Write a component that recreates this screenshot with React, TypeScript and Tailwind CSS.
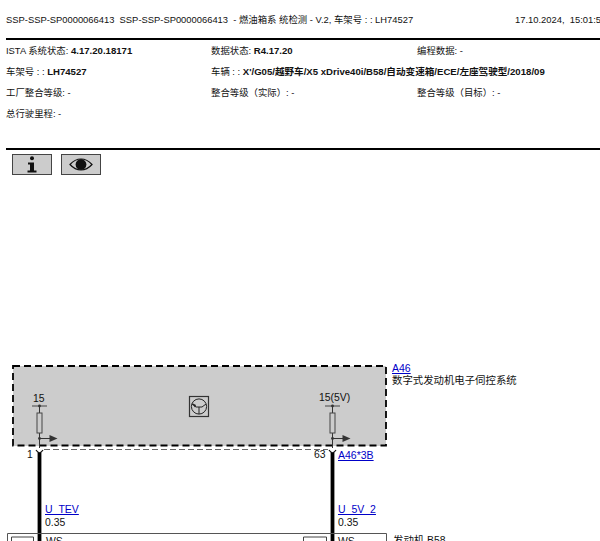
const fontStack = 'font-["Liberation_Sans","Noto_Sans_CJK_SC",sans-serif]'

type InfoRow = { label: string; value?: string }

const infoRows: InfoRow[] = [
  { label: 'ISTA 系统状态: ', value: '4.17.20.18171' },
  { label: '数据状态: ', value: 'R4.17.20' },
  { label: '编程数据: -' },
  { label: '车架号 : : ', value: 'LH74527' },
  { label: '车辆 : : ', value: "X'/G05/越野车/X5 xDrive40i/B58/自动变速箱/ECE/左座驾驶型/2018/09" },
  { label: '' },
  { label: '工厂整合等级: -' },
  { label: '整合等级（实际）: -' },
  { label: '整合等级（目标）: -' },
  { label: '总行驶里程: -' },
]

function InfoIcon() {
  return (
    <svg width="14" height="17" viewBox="0 0 14 17">
      <circle cx="7" cy="2.3" r="2" fill="#111" />
      <path d="M3 6.5h6v8h2.5v2h-9v-2H5v-6H3z" fill="#111" />
    </svg>
  )
}

function EyeIcon() {
  return (
    <svg width="24" height="13" viewBox="0 0 24 13">
      <path d="M1 6.5C5 2 8.5 1 12 1s7 1 11 5.5C19 11 15.5 12 12 12S5 11 1 6.5z" fill="none" stroke="#111" strokeWidth="1.2" />
      <circle cx="12" cy="6.5" r="5.4" fill="#111" />
    </svg>
  )
}

function Pin({ x }: { x: number }) {
  return (
    <g>
      <path d={`M${x - 7.5} 406h15`} stroke="#444" strokeWidth="1" />
      <circle cx={x} cy="406" r="1.4" fill="#333" />
      <path d={`M${x} 406v7M${x} 433v15`} stroke="#333" strokeWidth="1" />
      <rect x={x - 2.5} y="413" width="5" height="20" fill="#ccc" stroke="#444" strokeWidth="1" />
      <circle cx={x} cy="438.5" r="1.4" fill="#333" />
      <path d={`M${x} 438.5h11`} stroke="#333" strokeWidth="1" />
      <path d={`M${x + 10} 435v7l8-3.5z`} fill="#333" />
      <path d={`M${x - 3.5} 450q3.5 5.5 7 0`} fill="none" stroke="#111" strokeWidth="1.2" />
      <path d={`M${x} 453V541`} stroke="#000" strokeWidth="3.8" />
    </g>
  )
}

function Wiring() {
  return (
    <svg className="absolute left-0 top-0" width="600" height="176" viewBox="0 365 600 176">
      <rect x="13" y="366" width="373" height="80" fill="#ccc" />
      <path d="M13 366H386V445.5H13Z" fill="none" stroke="#000" strokeWidth="1.8" strokeDasharray="7 4" />
      <path d="M44 449.5H328" stroke="#666" strokeWidth="1.1" strokeDasharray="6 3" />
      <Pin x={39.5} />
      <Pin x={332.5} />
      <rect x="189.5" y="396.5" width="19" height="20" fill="#ccc" stroke="#333" strokeWidth="1.2" />
      <circle cx="199" cy="406.5" r="7.6" fill="none" stroke="#222" strokeWidth="1" />
      <path d="M192 404l4 3h6l4-3M199 407v7" fill="none" stroke="#222" strokeWidth="1" />
      <path d="M192 403l4 2-1 2.5z" fill="#222" />
      <path d="M7.5 541V533.5H386.5V541" fill="none" stroke="#555" strokeWidth="1" />
      <path d="M11.5 541V537H33.5V541M303.5 541V537H326.5V541" fill="none" stroke="#444" strokeWidth="1" />
    </svg>
  )
}

function Label({ className, children }: { className: string; children: React.ReactNode }) {
  return <span className={`absolute text-[10.4px] leading-3 whitespace-nowrap text-[#111] ${className}`}>{children}</span>
}

function WireLink({ className, children }: { className: string; children: React.ReactNode }) {
  return <span className={`absolute text-[10.5px] leading-3 whitespace-nowrap text-[#0000c8] underline ${className}`}>{children}</span>
}

export default function App() {
  return (
    <div className={`w-[600px] h-[541px] overflow-hidden bg-white text-[9.4px] text-[#111] ${fontStack}`}>
      {/* Title bar */}
      <div className="flex whitespace-nowrap pl-[6px] pt-[13px] h-[38px]">
        <span className="w-[509px] shrink-0">SSP-SSP-SP0000066413&nbsp; SSP-SSP-SP0000066413&nbsp; - 燃油箱系 统检测 - V.2, 车架号 : : LH74527</span>
        <span className="shrink-0">17.10.2024,&nbsp; 15:01:54</span>
      </div>
      <div className="h-[2px] bg-black ml-[6px]" />

      {/* Vehicle data */}
      <div className="grid grid-cols-[205px_206px_1fr] auto-rows-[21px] pl-[6px] pt-[1px] h-[108px] items-center">
        {infoRows.map((row, index) => (
          <div key={index} className="whitespace-nowrap">
            {row.label}
            {row.value && <b className="text-[9.6px]">{row.value}</b>}
          </div>
        ))}
      </div>
      <div className="h-[2px] bg-black ml-[6px]" />

      {/* Toolbar */}
      <div className="flex gap-[9px] pl-[12px] pt-[4px]">
        <button className="flex items-center justify-center w-[40px] h-[21px] bg-[#ccc] border border-[#444]">
          <InfoIcon />
        </button>
        <button className="flex items-center justify-center w-[40px] h-[21px] bg-[#ccc] border border-[#444]">
          <EyeIcon />
        </button>
      </div>

      {/* Wiring diagram */}
      <div className="relative mt-[190px] h-[176px]">
        <Wiring />
        <WireLink className="left-[392px] top-[-3px]">A46</WireLink>
        <Label className="left-[392px] top-[10px]">数字式发动机电子伺控系统</Label>
        <Label className="left-[33px] top-[28px]">15</Label>
        <Label className="left-[319px] top-[27px]">15(5V)</Label>
        <Label className="left-[27px] top-[84px]">1</Label>
        <Label className="left-[314px] top-[84px]">63</Label>
        <WireLink className="left-[338px] top-[84px]">A46*3B</WireLink>
        <WireLink className="left-[45px] top-[138px]">U_TEV</WireLink>
        <Label className="left-[45px] top-[152px]">0.35</Label>
        <WireLink className="left-[338px] top-[138px]">U_5V_2</WireLink>
        <Label className="left-[338px] top-[152px]">0.35</Label>
        <Label className="left-[46px] top-[171px]">WS</Label>
        <Label className="left-[338px] top-[171px]">WS</Label>
        <Label className="left-[393px] top-[170px]">发动机 B58</Label>
      </div>
    </div>
  )
}
